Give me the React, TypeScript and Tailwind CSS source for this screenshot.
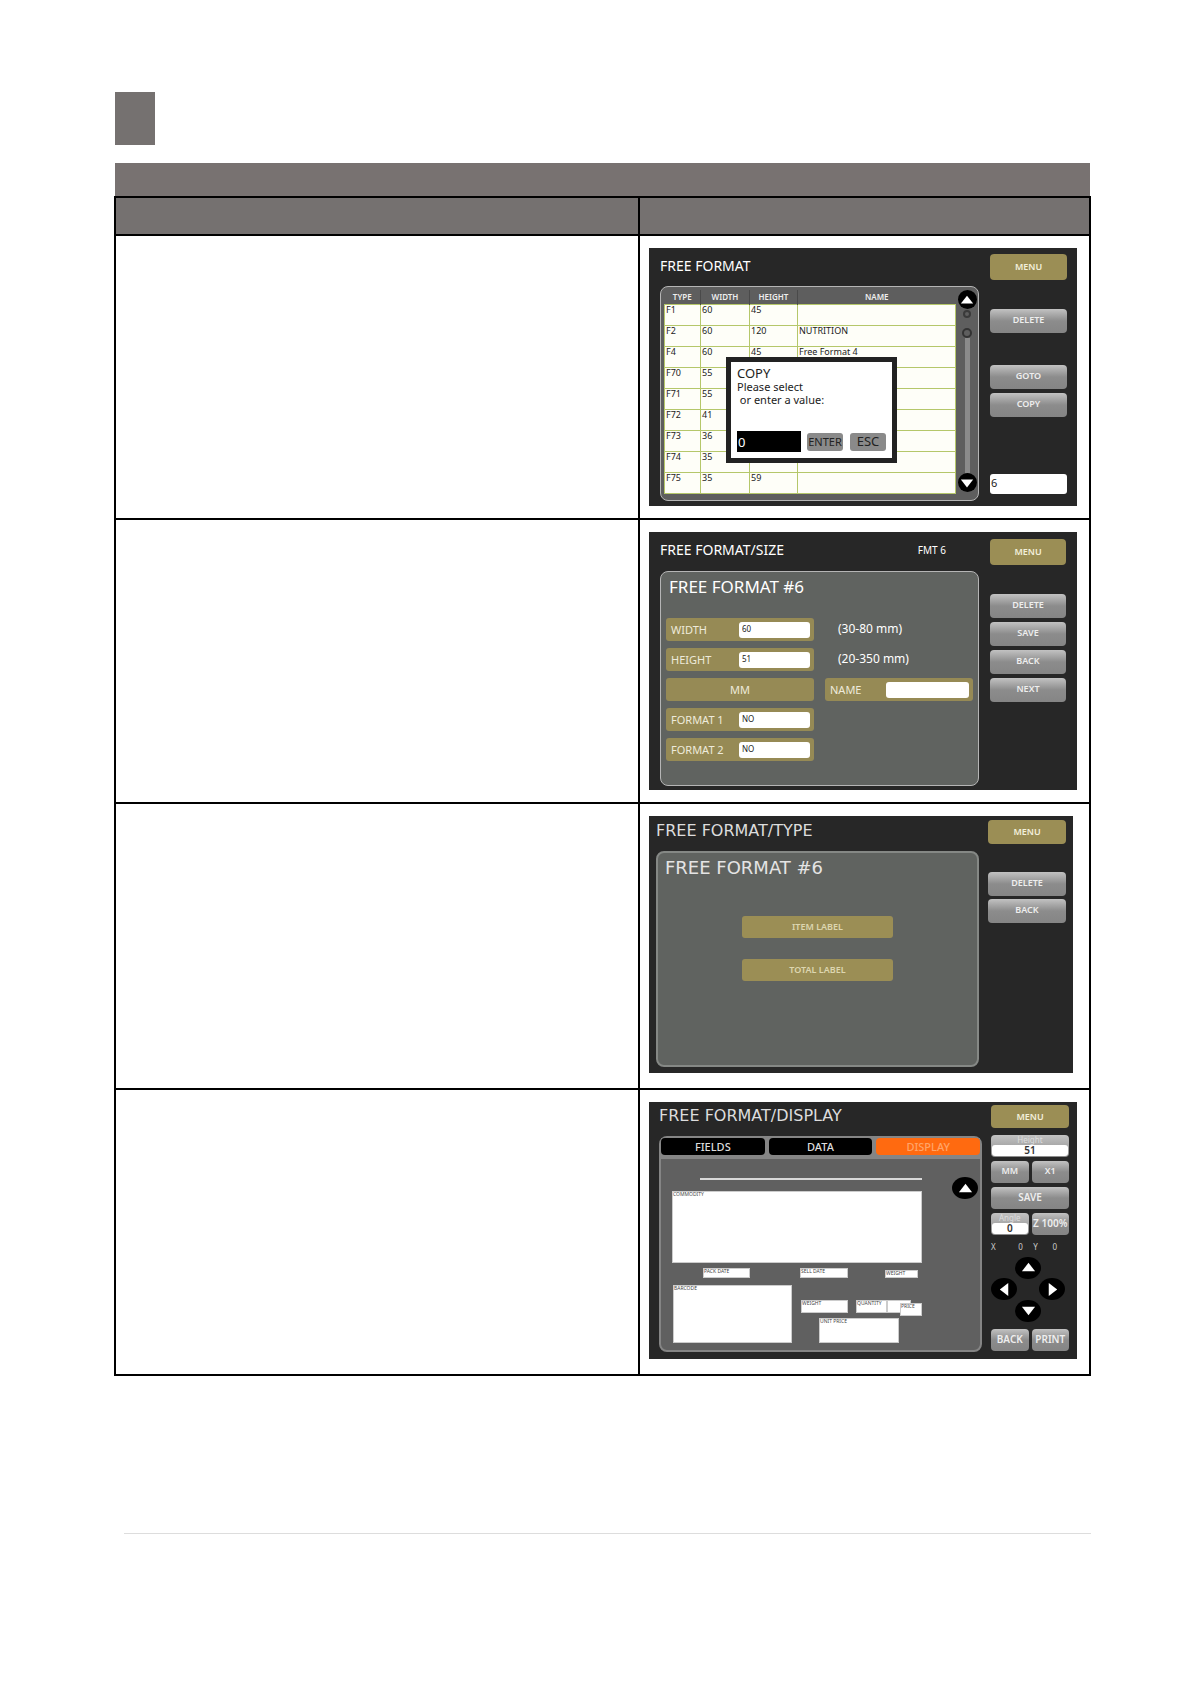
import type { ReactNode } from 'react';

const FORMATS = [
  { type: 'F1', width: 60, height: 45, name: '' },
  { type: 'F2', width: 60, height: 120, name: 'NUTRITION' },
  { type: 'F4', width: 60, height: 45, name: 'Free Format 4' },
  { type: 'F70', width: 55, height: '', name: '' },
  { type: 'F71', width: 55, height: '', name: '' },
  { type: 'F72', width: 41, height: '', name: '' },
  { type: 'F73', width: 36, height: '', name: '' },
  { type: 'F74', width: 35, height: '', name: '' },
  { type: 'F75', width: 35, height: 59, name: '' },
];

// boxes on the label canvas, in canvas pixels
const FIELDS = [
  { x: 9, y: 32, w: 250, h: 72, label: 'COMMODITY' },
  { x: 40, y: 109, w: 47, h: 10, label: 'PACK DATE' },
  { x: 137, y: 109, w: 48, h: 10, label: 'SELL DATE' },
  { x: 222, y: 111, w: 33, h: 8, label: 'WEIGHT' },
  { x: 10, y: 126, w: 119, h: 58, label: 'BARCODE' },
  { x: 138, y: 141, w: 47, h: 13, label: 'WEIGHT' },
  { x: 193, y: 141, w: 31, h: 13, label: 'QUANTITY' },
  { x: 224, y: 141, w: 24, h: 13, label: '' },
  { x: 237, y: 144, w: 22, h: 13, label: 'PRICE' },
  { x: 156, y: 159, w: 80, h: 25, label: 'UNIT PRICE' },
];

const TURN = { up: 'rotate-0', right: 'rotate-90', down: 'rotate-180', left: '-rotate-90' };

function Arrow({ dir, wide }: { dir: keyof typeof TURN; wide?: boolean }) {
  return (
    <button aria-label={dir} className={`flex shrink-0 items-center justify-center rounded-[50%] bg-black ${wide ? 'h-[22px] w-[26px]' : 'size-[19px]'}`}>
      <svg viewBox="0 0 16 16" className={`${wide ? 'size-[15px]' : 'size-[14px]'} ${TURN[dir]}`}>
        <path d="M8 3 L15 12 H1 Z" fill="#fff" />
      </svg>
    </button>
  );
}

function Gray({ children, className = 'h-6' }: { children: ReactNode; className?: string }) {
  return (
    <button className={`flex w-full items-center justify-center overflow-hidden rounded bg-linear-to-b from-[#c2c2c2] via-[#8c8c8c] to-[#858585] pb-0.5 text-[9px] leading-3 font-semibold text-[#eee] ${className}`}>
      {children}
    </button>
  );
}

function Menu({ className = 'h-[26px]' }: { className?: string }) {
  return (
    <button className={`w-full rounded bg-[#9b8e55] text-[9px] leading-3 font-semibold text-[#f3f0dc] ${className}`}>MENU</button>
  );
}

function Screen({ children, className = '' }: { children: ReactNode; className?: string }) {
  return <div className={`flex w-full bg-[#272727] text-white ${className}`}>{children}</div>;
}

function CopyDialog() {
  return (
    <div role="dialog" aria-label="Copy" className="absolute top-[70px] left-[65px] h-[106px] w-[171px] border-[5px] border-[#222] bg-white px-[6px] pt-[5px] text-[11px] leading-[13px] text-[#222]">
      <div className="text-[13px]">COPY</div>
      <label htmlFor="copy-to" className="block whitespace-pre">{'Please select\n or enter a value:'}</label>
      <div className="mt-[25px] flex items-center">
        <input id="copy-to" defaultValue="0" className="h-[21px] w-16 bg-black px-px text-[13px] text-white" />
        <button className="ml-1.5 h-[18px] w-9 rounded-[3px] bg-[#8a8a8a] text-[11px]">ENTER</button>
        <button className="ml-[7px] h-[18px] w-9 rounded-[3px] bg-[#8a8a8a] text-[13px]">ESC</button>
      </div>
    </div>
  );
}

function ListScreen() {
  return (
    <Screen className="h-[258px] pr-[10px] pl-[11px]">
      <div className="flex-1">
        <h2 className="h-[38px] pt-2 text-[14px] leading-5">FREE FORMAT</h2>
        <div className="relative flex h-[215px] rounded-lg border border-[#b5b5b5] bg-[#5e5e5e] pt-[3px] pl-[3px]">
          <table className="h-[203px] flex-1 table-fixed border-collapse text-[9px] leading-[10px] text-[#222]">
            <thead>
              <tr className="h-[14px] text-[8px] text-[#eee]">
                <th className="w-9 border-r border-[#4a4a4a] font-semibold">TYPE</th>
                <th className="w-[49px] border-r border-[#4a4a4a] font-semibold">WIDTH</th>
                <th className="w-12 border-r border-[#4a4a4a] font-semibold">HEIGHT</th>
                <th className="font-semibold">NAME</th>
              </tr>
            </thead>
            <tbody>
              {FORMATS.map(f => (
                <tr key={f.type} className="h-[21px] bg-[#fefef8] align-top">
                  <td className="border border-[#b5c76a] pl-px">{f.type}</td>
                  <td className="border border-[#b5c76a] pl-px">{f.width}</td>
                  <td className="border border-[#b5c76a] pl-px">{f.height}</td>
                  <td className="border border-[#b5c76a] pl-px">{f.name}</td>
                </tr>
              ))}
            </tbody>
          </table>
          <div className="flex w-[22px] flex-col items-center">
            <Arrow dir="up" />
            <span className="mt-px size-2 rounded-full border-2 border-[#3a3a3a]" />
            <span className="mt-2.5 size-2.5 rounded-full border-2 border-[#333]" />
            <span className="w-[5px] flex-1 bg-[#8b8b8b]" />
            <Arrow dir="down" />
            <span className="h-2" />
          </div>
          <CopyDialog />
        </div>
      </div>
      <div className="ml-[11px] flex w-[77px] flex-col pt-1.5">
        <Menu />
        <Gray className="mt-[29px] h-6">DELETE</Gray>
        <Gray className="mt-8 h-6">GOTO</Gray>
        <Gray className="mt-1 h-6">COPY</Gray>
        <input aria-label="Format number" defaultValue="6" className="mt-[57px] h-5 w-full rounded-[3px] bg-white px-px pb-1 text-[11px] text-[#222]" />
      </div>
    </Screen>
  );
}

function GoldField({ label, value = '', className = 'w-[148px]', inputClass = 'w-[71px]' }: { label: string; value?: string; className?: string; inputClass?: string }) {
  return (
    <label className={`flex h-[23px] items-center justify-between rounded-[3px] bg-[#968a55] pr-1 pl-[5px] text-[11px] text-[#eeeadb] ${className}`}>
      {label}
      <input defaultValue={value} className={`h-4 rounded-[3px] bg-white px-[3px] pb-[3px] text-[8px] text-[#222] ${inputClass}`} />
    </label>
  );
}

function SizeScreen() {
  return (
    <Screen className="h-[258px] pr-[11px] pl-[11px]">
      <div className="flex-1">
        <div className="flex h-[39px] justify-between pt-2 leading-5">
          <h2 className="text-[14px]">FREE FORMAT/SIZE</h2>
          <span className="pr-[33px] text-[10px]">FMT 6</span>
        </div>
        <div className="h-[215px] rounded-lg border border-[#b5b5b5] bg-[#606360] px-[5px]">
          <h3 className="h-[46px] pt-[3px] pl-[3px] text-[17px] leading-6">FREE FORMAT #6</h3>
          <div className="grid grid-cols-[148px_1fr] gap-x-[11px] gap-y-[7px] text-[12px] leading-[21px]">
            <GoldField label="WIDTH" value="60" />
            <span className="pl-[13px]">(30-80 mm)</span>
            <GoldField label="HEIGHT" value="51" />
            <span className="pl-[13px]">(20-350 mm)</span>
            <button className="h-[23px] rounded-[3px] bg-[#968a55] text-[11px] text-[#eeeadb]">MM</button>
            <GoldField label="NAME" className="w-full" inputClass="w-[83px]" />
            <GoldField label="FORMAT 1" value="NO" />
            <span />
            <GoldField label="FORMAT 2" value="NO" />
          </div>
        </div>
      </div>
      <div className="ml-[11px] flex w-[76px] flex-col gap-1 pt-[7px]">
        <Menu />
        <Gray className="mt-[25px] h-6">DELETE</Gray>
        <Gray>SAVE</Gray>
        <Gray>BACK</Gray>
        <Gray>NEXT</Gray>
      </div>
    </Screen>
  );
}

function TypeScreen() {
  return (
    <Screen className="h-[257px] max-w-[424px] pr-[7px] pl-[7px]">
      <div className="flex-1">
        <h2 className="h-[35px] pt-[5px] font-['DejaVu_Sans'] text-[16px] leading-5 text-[#ddd]">FREE FORMAT/TYPE</h2>
        <div className="flex h-[216px] flex-col items-center rounded-lg border-2 border-[#858885] bg-[#606360]">
          <h3 className="h-[63px] w-full pt-[3px] pl-[7px] font-['DejaVu_Sans'] text-[18px] leading-6 text-[#e4e4e4]">FREE FORMAT #6</h3>
          <button className="h-[22px] w-[151px] rounded-[3px] bg-[#9b8e55] text-[9px] font-semibold text-[#ddd6b0]">ITEM LABEL</button>
          <button className="mt-[21px] h-[22px] w-[151px] rounded-[3px] bg-[#9b8e55] text-[9px] font-semibold text-[#ddd6b0]">TOTAL LABEL</button>
        </div>
      </div>
      <div className="ml-[9px] flex w-[78px] flex-col pt-1">
        <Menu className="h-6" />
        <Gray className="mt-7 h-6">DELETE</Gray>
        <Gray className="mt-[3px] h-6">BACK</Gray>
      </div>
    </Screen>
  );
}

function ValueBox({ label, value }: { label: string; value: string }) {
  return (
    <label className="flex h-[22px] w-full flex-col overflow-hidden rounded bg-linear-to-b from-[#c2c2c2] to-[#8c8c8c] px-px pb-px text-center text-[8px] leading-[10px] text-[#ddd]">
      {label}
      <input defaultValue={value} className="h-[11px] w-full rounded-[3px] bg-white text-center text-[10px] leading-[11px] font-semibold text-[#333]" />
    </label>
  );
}

function DisplayScreen() {
  return (
    <Screen className="h-[257px] pr-2 pl-[10px]">
      <div className="flex-1">
        <h2 className="h-[34px] pt-1 font-['DejaVu_Sans'] text-[16px] leading-5 text-[#ddd]">FREE FORMAT/DISPLAY</h2>
        <div className="h-[216px] rounded-lg border-2 border-[#858585] bg-[#606060]">
          <div role="tablist" className="grid grid-cols-3 gap-1 bg-[#858585] pb-1 text-[11px] leading-[17px] font-medium text-[#ddd]">
            <button role="tab" className="rounded-sm bg-black">FIELDS</button>
            <button role="tab" className="rounded-sm bg-black">DATA</button>
            <button role="tab" aria-selected="true" className="rounded-sm bg-[#ff6a10] text-[#ffa468]">DISPLAY</button>
          </div>
          <div className="relative mx-[2px] h-[187px]">
            <span className="absolute top-[19px] left-[37px] h-0.5 w-[222px] bg-[#d8d8d8]" />
            {FIELDS.map((f, i) => (
              <div key={i} className="absolute overflow-hidden border border-[#ccc] bg-white text-[5px] leading-[5px] text-[#444]" style={{ left: f.x, top: f.y, width: f.w, height: f.h }}>
                {f.label}
              </div>
            ))}
            <div className="absolute top-[18px] right-0"><Arrow dir="up" wide /></div>
          </div>
        </div>
      </div>
      <div className="ml-[9px] flex w-[78px] flex-col gap-1 pt-[3px]">
        <Menu className="mb-[3px] h-[23px]" />
        <ValueBox label="Height" value="51" />
        <div className="flex gap-[3px]">
          <Gray className="h-[22px]">MM</Gray>
          <Gray className="h-[22px]">X1</Gray>
        </div>
        <Gray className="h-[22px] text-[10px]">SAVE</Gray>
        <div className="grid grid-cols-2 gap-[3px]">
          <ValueBox label="Angle" value="0" />
          <Gray className="h-[22px] text-[10px]">Z 100%</Gray>
        </div>
        <div className="flex justify-between pt-0.5 pr-3 text-[8px] leading-3 text-[#ccc]">
          <span>X</span>
          <span className="pl-3">0</span>
          <span>Y</span>
          <span className="pl-1">0</span>
        </div>
        <div className="grid grid-cols-[26px_22px_26px] grid-rows-[21px_22px_21px] items-center">
          <span />
          <span className="flex justify-center"><Arrow dir="up" wide /></span>
          <span />
          <Arrow dir="left" wide />
          <span />
          <Arrow dir="right" wide />
          <span />
          <span className="flex justify-center"><Arrow dir="down" wide /></span>
        </div>
        <div className="mt-1 flex gap-[3px]">
          <Gray className="h-[22px] text-[10px]">BACK</Gray>
          <Gray className="h-[22px] text-[10px]">PRINT</Gray>
        </div>
      </div>
    </Screen>
  );
}

const STEPS = [
  { id: 'list', screen: <ListScreen />, height: 'h-[284px]' },
  { id: 'size', screen: <SizeScreen />, height: 'h-[284px]' },
  { id: 'type', screen: <TypeScreen />, height: 'h-[286px]' },
  { id: 'display', screen: <DisplayScreen />, height: 'h-[286px]' },
];

export default function App() {
  return (
    <main className="bg-white pt-[92px] pr-[100px] pb-[149px] pl-[114px] font-['Noto_Sans',sans-serif]">
      <div className="ml-px h-[53px] w-10 bg-[#757170]" />
      <div className="mx-px mt-[18px] h-[33px] bg-[#787271]" />
      <table className="w-full table-fixed border-collapse">
        <thead>
          <tr className="h-[38px] bg-[#757170]">
            <th className="border-2 border-black" />
            <th className="w-[451px] border-2 border-black" />
          </tr>
        </thead>
        <tbody>
          {STEPS.map(s => (
            <tr key={s.id} className={`align-top ${s.height}`}>
              <td className="border-2 border-black" />
              <td className="border-2 border-black pt-3 pr-3 pl-[9px]">{s.screen}</td>
            </tr>
          ))}
        </tbody>
      </table>
      <hr className="mt-[157px] ml-[10px] border-[#ddd]" />
    </main>
  );
}
